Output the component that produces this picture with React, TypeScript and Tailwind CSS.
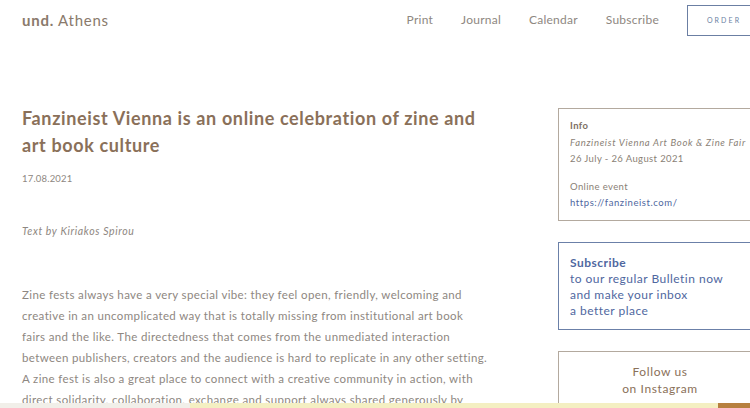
import React from 'react';

const navItems = ['Print', 'Journal', 'Calendar', 'Subscribe'];

const paragraphLines = [
  'Zine fests always have a very special vibe: they feel open, friendly, welcoming and',
  'creative in an uncomplicated way that is totally missing from institutional art book',
  'fairs and the like. The directedness that comes from the unmediated interaction',
  'between publishers, creators and the audience is hard to replicate in any other setting.',
  'A zine fest is also a great place to connect with a creative community in action, with',
  'direct solidarity, collaboration, exchange and support always shared generously by',
  'everyone involved.',
];

const App: React.FC = () => {
  return (
    <div className="relative w-[750px] h-[408px] overflow-hidden bg-white font-['Lato',sans-serif]">
      <header className="flex items-center h-[40px] pl-[22px]">
        <div className="text-[15px] tracking-[0.05em] text-[#8a7a6c]">
          <span className="font-bold">und.</span> Athens
        </div>
        <nav className="ml-auto flex items-center gap-7 text-[12px] tracking-[0.02em] text-[#8e8781]">
          {navItems.map((item) => (
            <a key={item} href="#" className="leading-none">
              {item}
            </a>
          ))}
          <a
            href="#"
            className="flex items-center justify-center w-[74px] h-[31px] shrink-0 border border-[#6b7fa3] text-[7px] tracking-[0.3em] text-[#6b7fa3] -mr-[11px]"
          >
            ORDER
          </a>
        </nav>
      </header>

      <div className="flex pl-[22px] pt-[65px]">
        <main className="w-[469px] shrink-0">
          <h1 className="text-[18px] leading-[27px] font-bold tracking-[0.035em] text-[#8a7059]">
            Fanzineist Vienna is an online celebration of zine and art book culture
          </h1>
          <p className="mt-[13px] text-[9.5px] tracking-[0.02em] text-[#8e8781]">17.08.2021</p>
          <p className="mt-[38px] text-[10.5px] italic tracking-[0.06em] text-[#8e8781]">Text by Kiriakos Spirou</p>
          <p className="mt-[44px] text-[11.5px] leading-[21px] tracking-[0.032em] text-[#8e8781] whitespace-nowrap">
            {paragraphLines.map((line) => (
              <span key={line} className="block">
                {line}
              </span>
            ))}
          </p>
        </main>

        <aside className="ml-[67px] mt-[3px] w-[204px] shrink-0 flex flex-col gap-[21px]">
          <div className="border border-[#b3a99e] px-[11px] pt-[9px] pb-[8px] text-[9.5px] leading-[16.5px] tracking-[0.04em] text-[#8a7f76] whitespace-nowrap">
            <p className="font-bold text-[#7d7064]">Info</p>
            <p className="italic tracking-[0.07em]">Fanzineist Vienna Art Book &amp; Zine Fair</p>
            <p>26 July - 26 August 2021</p>
            <p className="mt-[11px]">Online event</p>
            <p className="text-[#4f67a0] tracking-[0.06em]">https://fanzineist.com/</p>
          </div>
          <div className="border border-[#6b80a8] px-[11px] pt-[12px] pb-[10px] text-[12px] leading-[16px] tracking-[0.04em] text-[#4f67a0] whitespace-nowrap">
            <p className="font-bold">Subscribe</p>
            <p>to our regular Bulletin now</p>
            <p>and make your inbox</p>
            <p>a better place</p>
          </div>
          <div className="border border-[#b3a99e] pt-[11px] pb-[20px] text-center text-[12px] leading-[17px] tracking-[0.05em] text-[#8a7059]">
            <p>Follow us</p>
            <p>on Instagram</p>
          </div>
        </aside>
      </div>

      <div className="absolute bottom-0 left-0 right-0 h-[5px] flex">
        <div className="w-[190px] bg-[#f1efe9]" />
        <div className="flex-1 bg-[#f4efc2]" />
        <div className="w-[32px] bg-[#b7803f]" />
      </div>
    </div>
  );
};

export default App;
